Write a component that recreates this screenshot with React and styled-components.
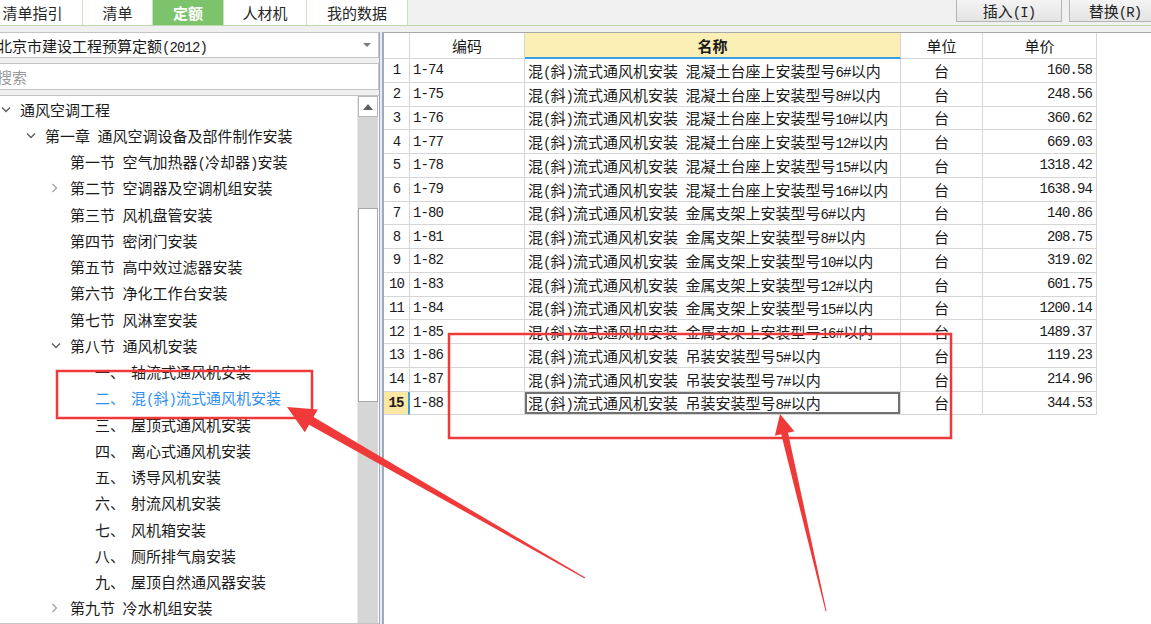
import React from 'react';
import styled, { createGlobalStyle } from 'styled-components';

const GlobalStyle = createGlobalStyle`
  body {
    margin: 0;
    background: #f0f0f0;
    overflow: hidden;
  }
`;

const tree = [
  { level: 0, open: true, text: '通风空调工程' },
  { level: 1, open: true, text: '第一章 通风空调设备及部件制作安装' },
  { level: 2, text: '第一节 空气加热器(冷却器)安装' },
  { level: 2, closed: true, text: '第二节 空调器及空调机组安装' },
  { level: 2, text: '第三节 风机盘管安装' },
  { level: 2, text: '第四节 密闭门安装' },
  { level: 2, text: '第五节 高中效过滤器安装' },
  { level: 2, text: '第六节 净化工作台安装' },
  { level: 2, text: '第七节 风淋室安装' },
  { level: 2, open: true, text: '第八节 通风机安装' },
  { level: 3, num: '一、', text: '轴流式通风机安装' },
  { level: 3, num: '二、', text: '混(斜)流式通风机安装', selected: true },
  { level: 3, num: '三、', text: '屋顶式通风机安装' },
  { level: 3, num: '四、', text: '离心式通风机安装' },
  { level: 3, num: '五、', text: '诱导风机安装' },
  { level: 3, num: '六、', text: '射流风机安装' },
  { level: 3, num: '七、', text: '风机箱安装' },
  { level: 3, num: '八、', text: '厕所排气扇安装' },
  { level: 3, num: '九、', text: '屋顶自然通风器安装' },
  { level: 2, closed: true, text: '第九节 冷水机组安装' },
];

const prefix = '混(斜)流式通风机安装 ';
const rows = [
  ['1-74', '混凝土台座上安装型号6#以内', '160.58'],
  ['1-75', '混凝土台座上安装型号8#以内', '248.56'],
  ['1-76', '混凝土台座上安装型号10#以内', '360.62'],
  ['1-77', '混凝土台座上安装型号12#以内', '669.03'],
  ['1-78', '混凝土台座上安装型号15#以内', '1318.42'],
  ['1-79', '混凝土台座上安装型号16#以内', '1638.94'],
  ['1-80', '金属支架上安装型号6#以内', '140.86'],
  ['1-81', '金属支架上安装型号8#以内', '208.75'],
  ['1-82', '金属支架上安装型号10#以内', '319.02'],
  ['1-83', '金属支架上安装型号12#以内', '601.75'],
  ['1-84', '金属支架上安装型号15#以内', '1200.14'],
  ['1-85', '金属支架上安装型号16#以内', '1489.37'],
  ['1-86', '吊装安装型号5#以内', '119.23'],
  ['1-87', '吊装安装型号7#以内', '214.96'],
  ['1-88', '吊装安装型号8#以内', '344.53'],
];

const tabs = [
  { label: '清单指引', w: 100 },
  { label: '清单', w: 70 },
  { label: '定额', w: 71, active: true },
  { label: '人材机', w: 83 },
  { label: '我的数据', w: 101 },
];

// half-width runs get a monospace face so they take half a CJK cell, as in SimSun
function Mixed({ children }) {
  const parts = String(children).split(/([\x20-\x7e]+)/).filter(Boolean);
  return (
    <span>
      {parts.map((part, i) =>
        /^[\x20-\x7e]+$/.test(part) ? <Latin key={i}>{part}</Latin> : <React.Fragment key={i}>{part}</React.Fragment>
      )}
    </span>
  );
}

function Chevron({ open }) {
  if (open) {
    return (
      <svg width="10" height="7" viewBox="0 0 10 7">
        <path d="M1 1.5 L5 5.5 L9 1.5" fill="none" stroke="#5a5a5a" strokeWidth="1.3" />
      </svg>
    );
  }
  return (
    <svg width="7" height="10" viewBox="0 0 7 10">
      <path d="M1.5 1 L5.5 5 L1.5 9" fill="none" stroke="#a0a0a0" strokeWidth="1.3" />
    </svg>
  );
}

export default function App() {
  return (
    <>
      <GlobalStyle />
      <Page>
        <TopBar>
          <Tabs>
            {tabs.map((t) => (
              <Tab key={t.label} $w={t.w} $active={t.active}>{t.label}</Tab>
            ))}
          </Tabs>
          <Spacer />
          <ToolButton $w={106}><Mixed>插入(I)</Mixed></ToolButton>
          <ToolButton $w={92} $last><Mixed>替换(R)</Mixed></ToolButton>
        </TopBar>

        <Main>
          <LeftPanel>
            <Select>
              <SelectText><Mixed>北京市建设工程预算定额(2012)</Mixed></SelectText>
              <DropArrow />
            </Select>
            <Search>搜索</Search>
            <TreeBox>
              <TreeList>
                {tree.map((n) => (
                  <TreeRow key={n.text} $level={n.level} $selected={n.selected}>
                    <ChevronSlot>
                      {n.open && <Chevron open />}
                      {n.closed && <Chevron />}
                    </ChevronSlot>
                    {n.num && <Num>{n.num}</Num>}
                    <Mixed>{n.text}</Mixed>
                  </TreeRow>
                ))}
              </TreeList>
              <ScrollBar>
                <ScrollUp>
                  <svg width="10" height="6" viewBox="0 0 10 6">
                    <path d="M0 6 L5 0 L10 6 Z" fill="#606060" />
                  </svg>
                </ScrollUp>
                <Track $h={91} />
                <Thumb />
                <Track />
              </ScrollBar>
            </TreeBox>
          </LeftPanel>

          <Splitter />

          <TableArea>
            <Grid>
              <HeadCell />
              <HeadCell>编码</HeadCell>
              <HeadCell $accent>名称</HeadCell>
              <HeadCell>单位</HeadCell>
              <HeadCell>单价</HeadCell>
              {rows.map((r, i) => {
                const cur = i === rows.length - 1;
                return (
                  <React.Fragment key={r[0]}>
                    <NumCell $current={cur}>{i + 1}</NumCell>
                    <CodeCell>{r[0]}</CodeCell>
                    <NameCell $current={cur}><Mixed>{prefix + r[1]}</Mixed></NameCell>
                    <UnitCell>台</UnitCell>
                    <PriceCell>{r[2]}</PriceCell>
                  </React.Fragment>
                );
              })}
            </Grid>
          </TableArea>
        </Main>

        <Annotations width="1151" height="624" viewBox="0 0 1151 624">
          <rect x="57" y="371" width="255" height="47" fill="none" stroke="#f03a3a" strokeWidth="2.5" />
          <rect x="449" y="334" width="502" height="104" fill="none" stroke="#f03a3a" strokeWidth="2.5" />
          <polygon
            fill="#f03a3a"
            points="287,407 317.8,409.6 313.5,417 585.3,577.6 584.7,578.4 309.1,424.8 304.8,432.2"
          />
          <polygon
            fill="#f03a3a"
            points="780,414 794.3,431.2 788,432.7 826.5,610.9 825.5,611.1 781.2,434.3 774.9,435.8"
          />
        </Annotations>
      </Page>
    </>
  );
}

const Page = styled.div`
  position: relative;
  width: 1151px;
  height: 624px;
  overflow: hidden;
  background: #f0f0f0;
  font-family: "Noto Sans CJK SC", "Liberation Sans", sans-serif;
  color: #1a1a1a;
  display: flex;
  flex-direction: column;
`;

const Latin = styled.span`
  font-family: "Liberation Mono", monospace;
  font-size: 14px;
  letter-spacing: -0.9px;
`;

const TopBar = styled.div`
  display: flex;
  align-items: flex-start;
  height: 25px;
  border-bottom: 1px solid #b8dcae;
  flex-shrink: 0;
`;

const Tabs = styled.div`
  display: flex;
  height: 25px;
  margin-left: -17px;
  background: #ffffff;
`;

const Tab = styled.div`
  width: ${(p) => p.$w}px;
  height: 25px;
  box-sizing: border-box;
  border-right: 1px solid #c6e4be;
  display: flex;
  align-items: center;
  justify-content: center;
  font-size: 15px;
  font-weight: ${(p) => (p.$active ? 700 : 400)};
  color: ${(p) => (p.$active ? '#ffffff' : '#262626')};
  background: ${(p) => (p.$active ? '#7dc36b' : '#ffffff')};
`;

const Spacer = styled.div`
  flex: 1;
`;

const ToolButton = styled.div`
  width: ${(p) => p.$w}px;
  height: 23px;
  margin-top: -1px;
  margin-left: 7px;
  margin-right: ${(p) => (p.$last ? '-10px' : '0')};
  box-sizing: border-box;
  border: 1px solid #b4b4b4;
  background: linear-gradient(#f4f4f4, #e4e4e4);
  display: flex;
  align-items: center;
  justify-content: center;
  font-size: 15px;
  color: #222;
`;

const Main = styled.div`
  flex: 1;
  display: flex;
  padding-top: 6px;
  min-height: 0;
`;

const LeftPanel = styled.div`
  width: 385px;
  margin-left: -6px;
  flex-shrink: 0;
  display: flex;
  flex-direction: column;
`;

const Select = styled.div`
  height: 26px;
  box-sizing: border-box;
  border: 1px solid #c4c4c4;
  background: #fff;
  display: flex;
  align-items: center;
  padding: 0 7px 0 2px;
  font-size: 15px;
  color: #1a1a1a;
`;

const SelectText = styled.div`
  flex: 1;
  white-space: pre;
`;

const DropArrow = styled.div`
  width: 0;
  height: 0;
  border-left: 4px solid transparent;
  border-right: 4px solid transparent;
  border-top: 4px solid #7a7a7a;
`;

const Search = styled.div`
  height: 27px;
  margin-top: 5px;
  box-sizing: border-box;
  border: 1px solid #c4c4c4;
  background: #fff;
  display: flex;
  align-items: center;
  padding-left: 2px;
  font-size: 15px;
  color: #9a9a9a;
`;

const TreeBox = styled.div`
  flex: 1;
  margin-top: 5px;
  border: 1px solid #c4c4c4;
  border-right: none;
  background: #fff;
  display: flex;
  min-height: 0;
`;

const TreeList = styled.div`
  flex: 1;
  overflow: hidden;
`;

const TreeRow = styled.div`
  height: 26.26px;
  display: flex;
  align-items: center;
  padding-left: ${(p) => p.$level * 25}px;
  font-size: 15px;
  white-space: pre;
  color: ${(p) => (p.$selected ? '#2f8ff0' : '#1a1a1a')};
`;

const ChevronSlot = styled.div`
  width: 25px;
  flex-shrink: 0;
  display: flex;
  align-items: center;
  padding-left: 6px;
  box-sizing: border-box;
`;

const Num = styled.span`
  width: 36px;
  flex-shrink: 0;
`;

const ScrollBar = styled.div`
  width: 20px;
  margin-right: 1px;
  display: flex;
  flex-direction: column;
  background: #d6d6d6;
  border-left: 1px solid #e8e8e8;
`;

const ScrollUp = styled.div`
  height: 21px;
  box-sizing: border-box;
  border: 1px solid #b8b8b8;
  background: #fff;
  display: flex;
  align-items: center;
  justify-content: center;
`;

const Track = styled.div`
  height: ${(p) => (p.$h ? `${p.$h}px` : 'auto')};
  flex: ${(p) => (p.$h ? 'none' : '1')};
  background: #d6d6d6;
`;

const Thumb = styled.div`
  height: 194px;
  box-sizing: border-box;
  border: 1px solid #a8a8a8;
  background: #fff;
`;

const Splitter = styled.div`
  width: 5px;
  flex-shrink: 0;
  background: linear-gradient(
    to right,
    #9eacba 0 1px,
    #e6ecf2 1px 3px,
    #9eacba 3px 5px
  );
`;

const TableArea = styled.div`
  flex: 1;
  background: #fff;
  border-top: 1px solid #a8a8a8;
  overflow: hidden;
`;

const Grid = styled.div`
  display: grid;
  grid-template-columns: 26px 115px 376px 82px 114px;
  grid-template-rows: 26px repeat(15, 23.75px);
  width: max-content;
`;

const Cell = styled.div`
  box-sizing: border-box;
  border-right: 1px solid #d6d6d6;
  border-bottom: 1px solid #d6d6d6;
  display: flex;
  align-items: center;
  white-space: pre;
  overflow: hidden;
  font-size: 15px;
  color: #1a1a1a;
`;

const HeadCell = styled(Cell)`
  justify-content: center;
  font-weight: ${(p) => (p.$accent ? 700 : 400)};
  background: ${(p) => (p.$accent ? '#fcefb6' : '#fff')};
  border-bottom: ${(p) => (p.$accent ? '2px solid #3aa0e0' : '1px solid #d6d6d6')};
`;

const NumCell = styled(Cell)`
  justify-content: center;
  font-family: "Liberation Mono", monospace;
  font-size: 14px;
  letter-spacing: -0.9px;
  font-weight: ${(p) => (p.$current ? 700 : 400)};
  background: ${(p) => (p.$current ? '#fce6a4' : '#fff')};
  border-right: ${(p) => (p.$current ? '2px solid #3aa0e0' : '1px solid #d6d6d6')};
`;

const CodeCell = styled(Cell)`
  padding-left: 3px;
  font-family: "Liberation Mono", monospace;
  font-size: 14px;
  letter-spacing: -0.9px;
`;

const NameCell = styled(Cell)`
  padding-left: 3px;
  box-shadow: ${(p) => (p.$current ? 'inset 0 0 0 2px #717171' : 'none')};
`;

const UnitCell = styled(Cell)`
  justify-content: center;
`;

const PriceCell = styled(Cell)`
  justify-content: flex-end;
  padding-right: 4px;
  font-family: "Liberation Mono", monospace;
  font-size: 14px;
  letter-spacing: -0.9px;
`;

const Annotations = styled.svg`
  position: absolute;
  left: 0;
  top: 0;
  pointer-events: none;
`;
